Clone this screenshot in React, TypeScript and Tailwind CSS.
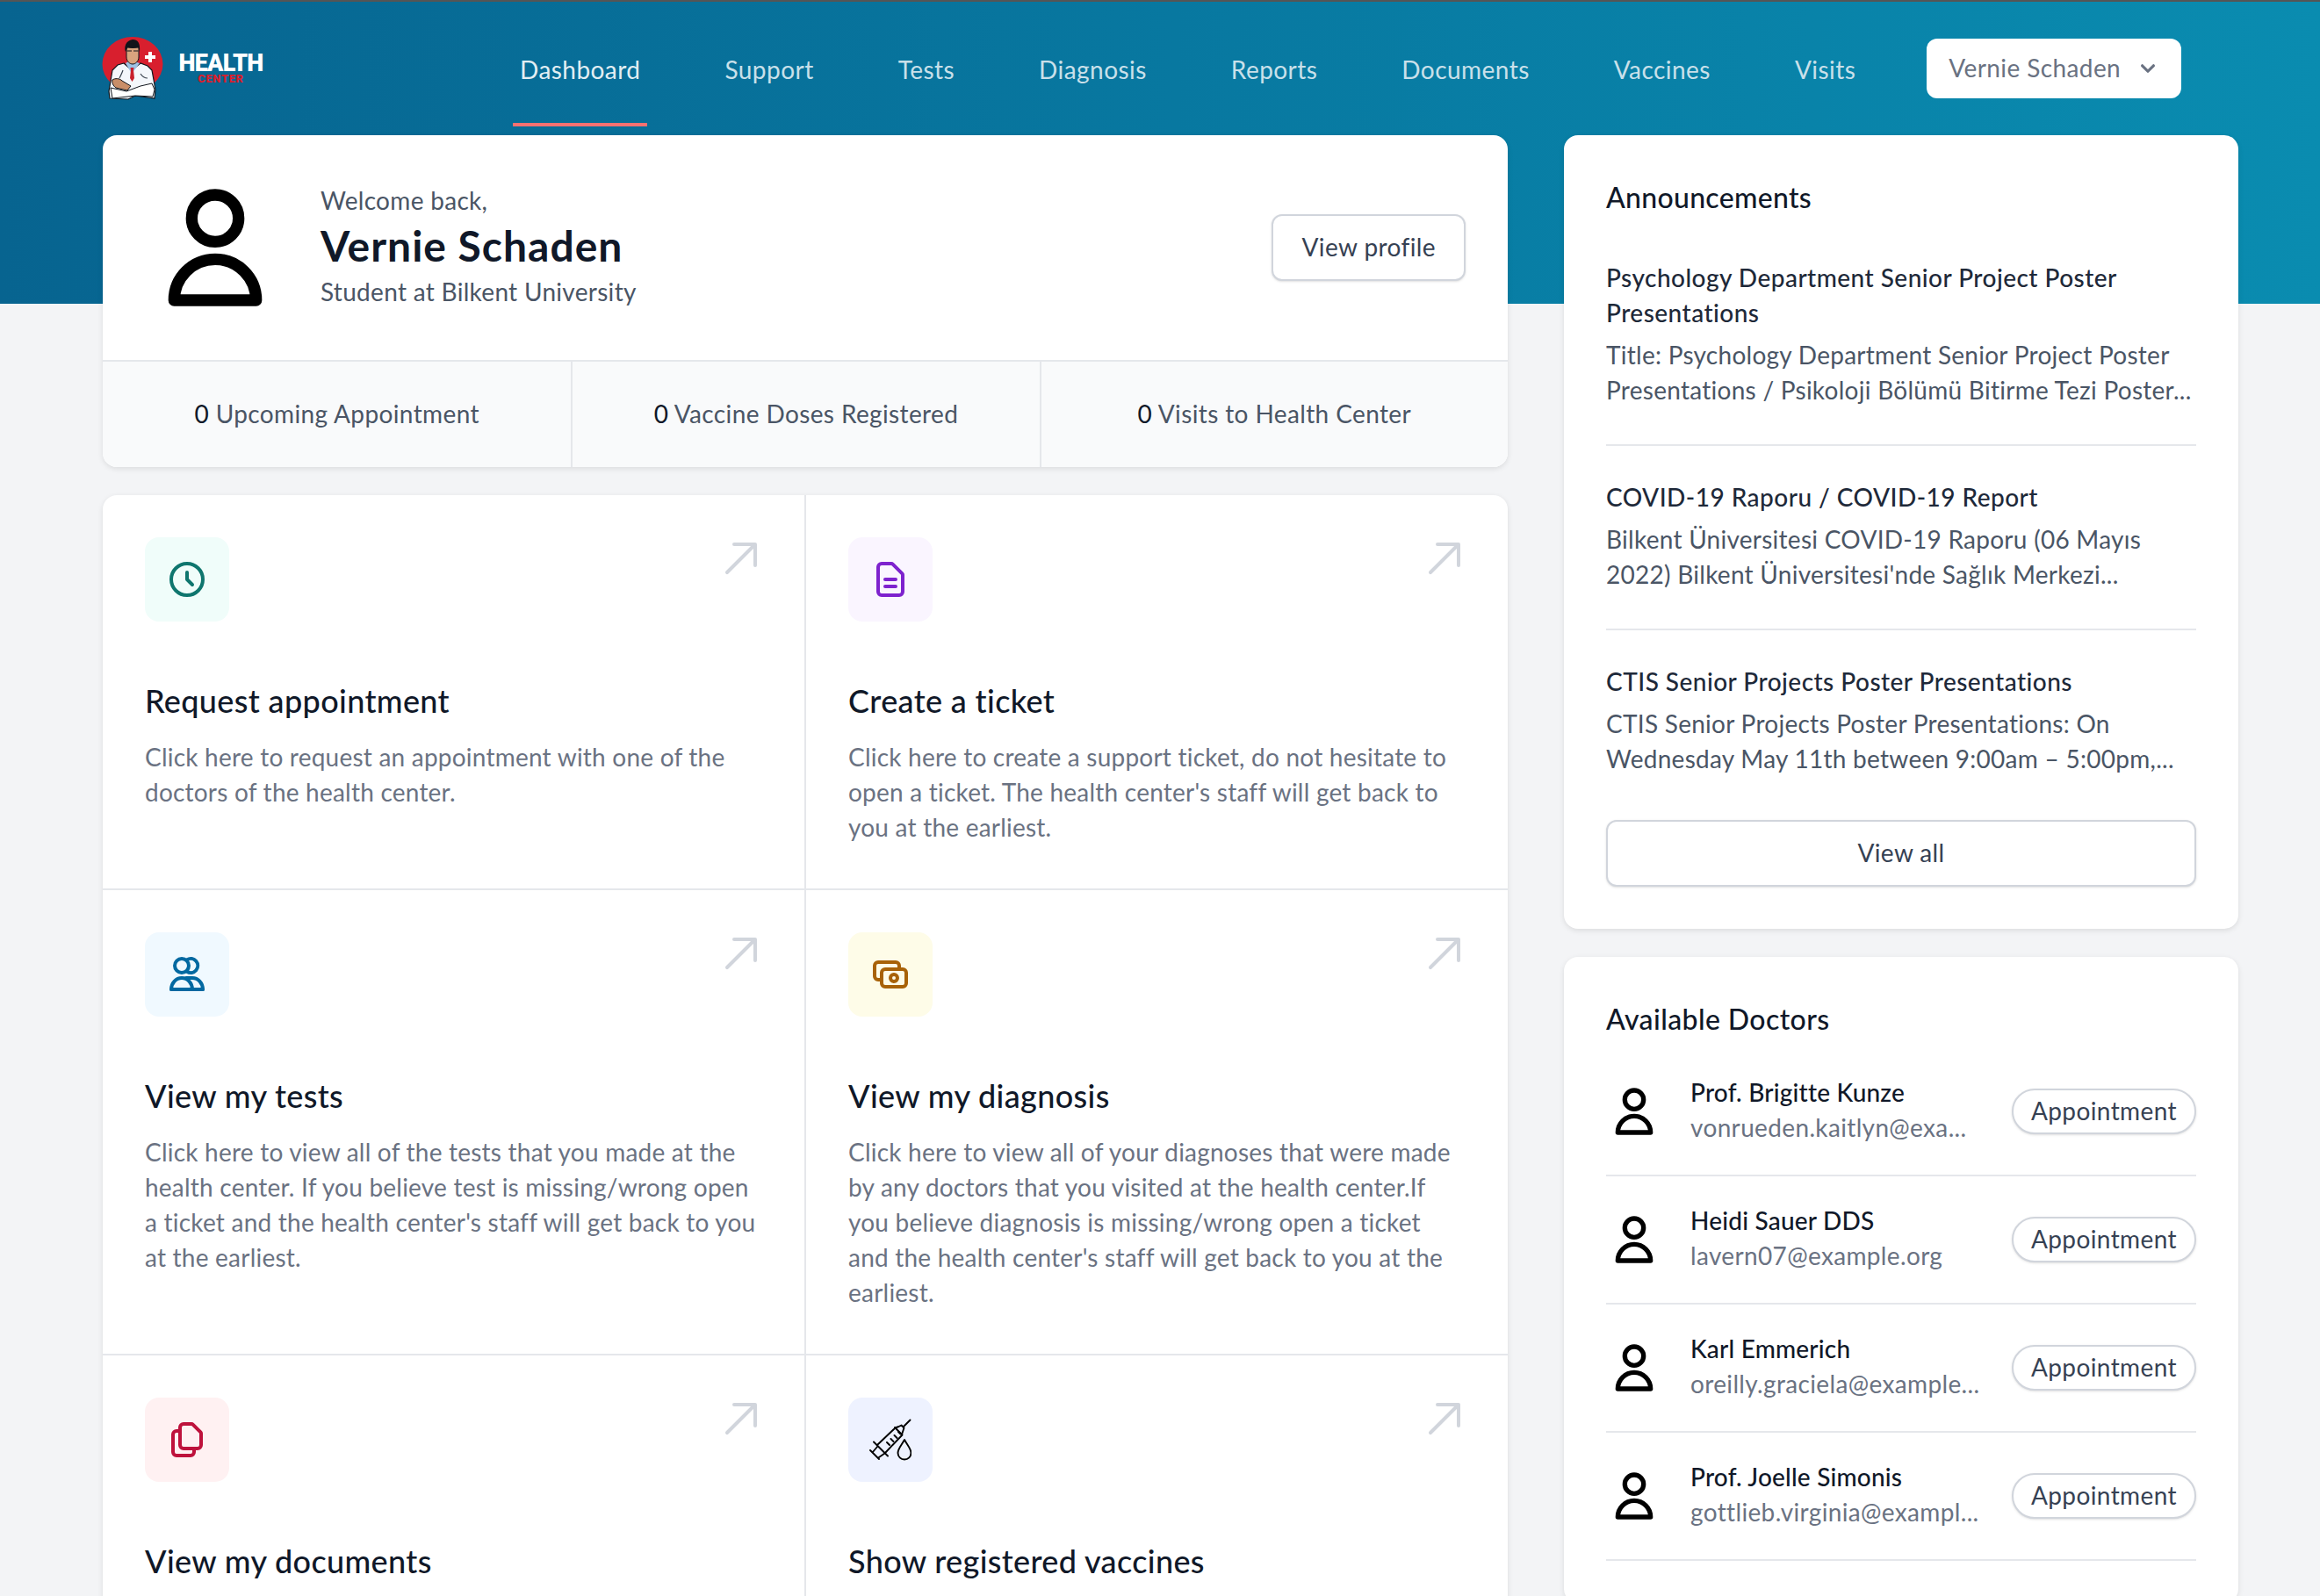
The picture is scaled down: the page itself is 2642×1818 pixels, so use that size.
import React from "react";
import { ReactNode } from "react";

const navItems = ["Dashboard", "Support", "Tests", "Diagnosis", "Reports", "Documents", "Vaccines", "Visits"];

const stats = [
  { count: 0, label: "Upcoming Appointment" },
  { count: 0, label: "Vaccine Doses Registered" },
  { count: 0, label: "Visits to Health Center" },
];

const announcements = [
  {
    title: "Psychology Department Senior Project Poster Presentations",
    body: "Title: Psychology Department Senior Project Poster Presentations / Psikoloji Bölümü Bitirme Tezi Poster...",
  },
  {
    title: "COVID-19 Raporu / COVID-19 Report",
    body: "Bilkent Üniversitesi COVID-19 Raporu (06 Mayıs 2022) Bilkent Üniversitesi'nde Sağlık Merkezi...",
  },
  {
    title: "CTIS Senior Projects Poster Presentations",
    body: "CTIS Senior Projects Poster Presentations: On Wednesday May 11th between 9:00am – 5:00pm,...",
  },
];

const doctors = [
  { name: "Prof. Brigitte Kunze", email: "vonrueden.kaitlyn@exa..." },
  { name: "Heidi Sauer DDS", email: "lavern07@example.org" },
  { name: "Karl Emmerich", email: "oreilly.graciela@example..." },
  { name: "Prof. Joelle Simonis", email: "gottlieb.virginia@exampl..." },
];

function Outline({ d, className }: { d: string; className: string }) {
  return (
    <svg className={className} viewBox="0 0 24 24" fill="none" stroke="currentColor" strokeWidth={2} strokeLinecap="round" strokeLinejoin="round">
      <path d={d} />
    </svg>
  );
}

function UserIcon({ className }: { className: string }) {
  return <Outline className={className} d="M16 7a4 4 0 11-8 0 4 4 0 018 0zM12 14a7 7 0 00-7 7h14a7 7 0 00-7-7z" />;
}

function PeopleIcon() {
  return (
    <svg className="h-12 w-12" viewBox="0 0 24 24" fill="none" stroke="currentColor" strokeWidth={2} strokeLinecap="round" strokeLinejoin="round">
      <circle cx="9" cy="7" r="4" />
      <path d="M12 3.6A4 4 0 1 1 12 10.4" />
      <path d="M3 20.5h18" />
      <path d="M3 20.5a6 6.5 0 0 1 12 0" />
      <path d="M11.5 14h3.5a6 6.5 0 0 1 6 6.5" />
    </svg>
  );
}

function SyringeIcon() {
  return (
    <svg className="h-12 w-12" viewBox="0 0 48 48" fill="none" stroke="#000" strokeWidth={1.9} strokeLinecap="round" strokeLinejoin="round">
      <path d="M46.5 1.5 39 9" />
      <path d="M29.5 10.5 33.5 9l3-1.5 3 3-1 3-1.5 4.5-8-8z" />
      <path d="M29.5 10.5 9 30M37.5 18.5 18 39" />
      <path d="M5 26.5 21 42.5M1 36l10 10M9 32l-5.500 6.500M17.500 39.500 11 44" />
      <path d="M20 27l3 3M24.500 23l3 3M28.500 19l3 3M33 15l2.500 2.500" />
      <path d="M40 24c-3.500 6.500-7.500 10-7.500 15a7.500 7.500 0 0 0 15 0c0-5-4-8.500-7.500-15z" />
    </svg>
  );
}

function Logo() {
  return (
    <div className="flex items-center gap-[17px]">
      <svg className="h-[72px] w-[70px]" viewBox="0 0 70 72">
        <ellipse cx="35" cy="31" rx="34.500" ry="31" fill="#d81f2e" />
        <path d="M50.500 22h4v-4h4v4h4v4h-4v4h-4v-4h-4z" fill="#fff" transform="translate(-1.500 -1)" />
        <path d="M25 30 18 32 12 38 8 62 9 70 30 71 38 67 60 70 61 60 57 38 52 33 44 30 34 38z" fill="#f4f7fb" stroke="#10151c" strokeWidth="1.200" />
        <path d="M27 30 34 42 43 30 37 28H30z" fill="#9cc2e4" />
        <path d="M32.500 35h4l-.500 3 1 9-2.500 4-2.500-4 1-9z" fill="#c8202c" />
        <path d="M28 12h14v11c0 5-4 8-7 8s-7-3-7-8z" fill="#d9a47e" stroke="#10151c" strokeWidth="1" />
        <path d="M27 17c-2-5 0-13 8-14 6 0 9 4 8 14l-1.500-5c-5 1.500-9 1-12 0z" fill="#12141a" />
        <path d="M28.500 16h5.500M36 16h5.500" stroke="#12141a" strokeWidth="1.200" />
        <path d="M12 49c3-2 8-2 11 1l10 6-4 5-13-3c-3-2-5-6-4-9z" fill="#c98e68" stroke="#10151c" strokeWidth="1" />
        <path d="M10 58 28 62 44 56 57 53 60 60 58 68 38 67 12 70z" fill="#fff" stroke="#10151c" strokeWidth="1" />
        <path d="M44 42c2 3 5 5 8 5M24 38c-1 3-3 7-4 9" stroke="#39424e" strokeWidth="1.200" fill="none" />
      </svg>
      <div className="flex w-[97px] flex-col items-center gap-px pt-px">
        <span className="font-['Roboto',sans-serif] text-[27px] leading-[22px] font-black tracking-[-0.700px] text-white">HEALTH</span>
        <span className="font-['Roboto',sans-serif] text-[13px] leading-[12px] font-black tracking-[0.600px] text-[#d81f2e]">CENTER</span>
      </div>
    </div>
  );
}

function Header() {
  return (
    <div className="h-[344px] bg-linear-to-r from-[#076490] to-[#0a8cb0]">
      <div className="flex h-[152px] items-start pl-[116px]">
        <div className="mt-[40px]">
          <Logo />
        </div>
        <nav className="ml-[284px] flex h-[142px] items-center gap-[80px]">
          {navItems.map((item, i) => (
            <a
              key={item}
              className={
                i === 0
                  ? "flex h-full items-center border-b-4 border-[#f87171] px-2 pt-[16px] text-[28px] tracking-[0.45px] text-[#e2eef3]"
                  : "flex h-full items-center border-b-4 border-transparent px-2 pt-[16px] text-[28px] tracking-[0.45px] text-[#c9e0ea]"
              }
            >
              {item}
            </a>
          ))}
        </nav>
        <button className="mt-[42px] ml-[73px] flex h-[68px] items-center gap-[15px] rounded-xl bg-white pr-[22px] pb-[3px] pl-[25px] text-[28px] tracking-[0.4px] text-gray-500">
          Vernie Schaden
          <svg className="mt-[3px] h-8 w-8" viewBox="0 0 20 20" fill="currentColor">
            <path d="M5.293 7.293a1 1 0 011.414 0L10 10.586l3.293-3.293a1 1 0 111.414 1.414l-4 4a1 1 0 01-1.414 0l-4-4a1 1 0 010-1.414z" />
          </svg>
        </button>
      </div>
    </div>
  );
}

function ProfileCard() {
  return (
    <section className="overflow-hidden rounded-2xl bg-white shadow-[0_2px_6px_rgba(0,0,0,0.1)]">
      <div className="flex items-center justify-between p-12">
        <div className="flex items-center gap-10">
          <UserIcon className="h-40 w-40 text-black" />
          <div className="-mt-[2px] mb-[2px]">
            <p className="text-[28px] leading-[40px] tracking-[0.3px] text-gray-600">Welcome back,</p>
            <p className="text-[48px] leading-[64px] font-bold tracking-[1px] text-gray-900">Vernie Schaden</p>
            <p className="text-[28px] leading-[40px] tracking-[0.3px] text-gray-600">Student at Bilkent University</p>
          </div>
        </div>
        <button className="h-[76px] rounded-xl border-2 border-gray-300 bg-white px-8 pb-[3px] text-[28px] tracking-[0.4px] text-gray-700 shadow-sm">View profile</button>
      </div>
      <div className="grid grid-cols-3 border-t-2 border-gray-200 bg-gray-50">
        {stats.map((s, i) => (
          <div
            key={s.label}
            className={
              i === 0
                ? "pt-[39px] pb-[41px] text-center text-[28px] leading-[40px] tracking-[0.38px]"
                : "border-l-2 border-gray-200 pt-[39px] pb-[41px] text-center text-[28px] leading-[40px] tracking-[0.38px]"
            }
          >
            <span className="text-gray-900">{s.count}</span> <span className="text-gray-600">{s.label}</span>
          </div>
        ))}
      </div>
    </section>
  );
}

function ActionCard({ icon, tile, title, body }: { icon: ReactNode; tile: string; title: string; body?: string }) {
  return (
    <div className="relative bg-white p-12">
      <div className={"flex h-24 w-24 items-center justify-center rounded-2xl " + tile}>{icon}</div>
      <svg className="absolute top-12 right-12 h-12 w-12 text-gray-300" viewBox="0 0 24 24" fill="currentColor">
        <path d="M20 4h1a1 1 0 00-1-1v1zm-1 12a1 1 0 102 0h-2zM8 3a1 1 0 000 2V3zM3.293 19.293a1 1 0 101.414 1.414l-1.414-1.414zM19 4v12h2V4h-2zm1-1H8v2h12V3zm-.707.293l-16 16 1.414 1.414 16-16-1.414-1.414z" />
      </svg>
      <h3 className="mt-[62px] mb-[2px] text-[36px] leading-[56px] font-medium tracking-[0.36px] text-gray-900">{title}</h3>
      {body && <p className="mt-[16px] mb-[2px] text-[28px] leading-[40px] tracking-[0.22px] text-gray-500">{body}</p>}
    </div>
  );
}

function ActionGrid() {
  return (
    <section className="grid grid-cols-2 gap-[2px] overflow-hidden rounded-2xl bg-gray-200 shadow-[0_2px_6px_rgba(0,0,0,0.1)]">
      <ActionCard
        tile="bg-[#f0fdfa] text-[#0f766e]"
        icon={<Outline className="h-12 w-12" d="M12 8v4l3 3m6-3a9 9 0 11-18 0 9 9 0 0118 0z" />}
        title="Request appointment"
        body="Click here to request an appointment with one of the doctors of the health center."
      />
      <ActionCard
        tile="bg-[#faf5ff] text-[#7e22ce]"
        icon={<Outline className="h-12 w-12" d="M9 12h6m-6 4h6m2 5H7a2 2 0 01-2-2V5a2 2 0 012-2h5.586a1 1 0 01.707.293l5.414 5.414a1 1 0 01.293.707V19a2 2 0 01-2 2z" />}
        title="Create a ticket"
        body="Click here to create a support ticket, do not hesitate to open a ticket. The health center's staff will get back to you at the earliest."
      />
      <ActionCard
        tile="bg-[#f0f9ff] text-[#0369a1]"
        icon={<PeopleIcon />}
        title="View my tests"
        body="Click here to view all of the tests that you made at the health center. If you believe test is missing/wrong open a ticket and the health center's staff will get back to you at the earliest."
      />
      <ActionCard
        tile="bg-[#fefce8] text-[#a86208]"
        icon={<Outline className="h-12 w-12" d="M17 9V7a2 2 0 00-2-2H5a2 2 0 00-2 2v6a2 2 0 002 2h2m2 4h10a2 2 0 002-2v-6a2 2 0 00-2-2H9a2 2 0 00-2 2v6a2 2 0 002 2zm7-5a2 2 0 11-4 0 2 2 0 014 0z" />}
        title="View my diagnosis"
        body="Click here to view all of your diagnoses that were made by any doctors that you visited at the health center.If you believe diagnosis is missing/wrong open a ticket and the health center's staff will get back to you at the earliest."
      />
      <ActionCard
        tile="bg-[#fff1f2] text-[#be123c]"
        icon={<Outline className="h-12 w-12" d="M8 7v8a2 2 0 002 2h6M8 7V5a2 2 0 012-2h4.586a1 1 0 01.707.293l4.414 4.414a1 1 0 01.293.707V15a2 2 0 01-2 2h-2M8 7H6a2 2 0 00-2 2v10a2 2 0 002 2h8a2 2 0 002-2v-2" />}
        title="View my documents"
      />
      <ActionCard tile="bg-[#eef2ff]" icon={<SyringeIcon />} title="Show registered vaccines" />
    </section>
  );
}

function Announcements() {
  return (
    <section className="rounded-2xl bg-white p-12 shadow-[0_2px_6px_rgba(0,0,0,0.1)]">
      <h2 className="-mt-[1px] mb-[1px] text-[32px] leading-[48px] font-medium tracking-[0.3px] text-gray-900">Announcements</h2>
      <ul className="-mb-10 mt-[9px] divide-y-2 divide-gray-200">
        {announcements.map((a) => (
          <li key={a.title} className="pt-[38px] pb-[42px]">
            <h3 className="text-[28px] leading-[40px] font-medium tracking-[0.47px] text-gray-800">{a.title}</h3>
            <p className="mt-2 text-[28px] leading-[40px] tracking-[0.27px] text-gray-600">{a.body}</p>
          </li>
        ))}
      </ul>
      <button className="mt-12 h-[76px] w-full rounded-xl border-2 border-gray-300 bg-white pb-[3px] text-[28px] tracking-[0.4px] text-gray-700 shadow-sm">View all</button>
    </section>
  );
}

function Doctors() {
  return (
    <section className="rounded-2xl bg-white p-12 shadow-[0_2px_6px_rgba(0,0,0,0.1)]">
      <h2 className="-mt-[1px] mb-[1px] text-[32px] leading-[48px] font-medium tracking-[0.4px] text-gray-900">Available Doctors</h2>
      <ul className="mt-[9px] divide-y-2 divide-gray-200 border-b-2 border-gray-200">
        {doctors.map((d) => (
          <li key={d.email} className="flex items-center gap-8 py-8">
            <UserIcon className="h-16 w-16 shrink-0 text-black" />
            <div className="-mt-[2px] mb-[2px] min-w-0 flex-1">
              <p className="truncate text-[28px] leading-[40px] font-medium tracking-[0.2px] text-gray-900">{d.name}</p>
              <p className="truncate text-[28px] leading-[40px] tracking-[0.35px] text-gray-500">{d.email}</p>
            </div>
            <a className="rounded-full border-2 border-gray-300 bg-white px-[20px] pt-[3px] pb-[5px] text-[28px] leading-[40px] tracking-[0.4px] text-gray-700 shadow-sm">Appointment</a>
          </li>
        ))}
      </ul>
    </section>
  );
}

export default function App() {
  return (
    <div className="h-[1818px] overflow-hidden border-t-2 border-[#555] bg-gray-100 font-['Lato',sans-serif]">
      <Header />
      <main className="-mt-[192px] grid grid-cols-[1600px_768px] gap-x-16 pl-[117px]">
        <div className="flex flex-col gap-8">
          <ProfileCard />
          <ActionGrid />
        </div>
        <div className="flex flex-col gap-8">
          <Announcements />
          <Doctors />
        </div>
      </main>
    </div>
  );
}
